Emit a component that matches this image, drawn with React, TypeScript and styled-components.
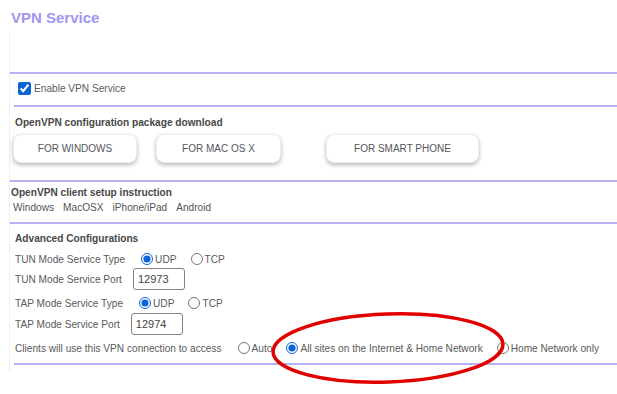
import styled, { createGlobalStyle } from "styled-components";

const GlobalStyle = createGlobalStyle`
  html, body {
    margin: 0;
    padding: 0;
    background: #fff;
  }
  body {
    font-family: "Liberation Sans", Arial, sans-serif;
    color: #5a5a5a;
  }
`;

interface RadioOption {
  label: string;
  checked?: boolean;
}

const downloads = [
  { label: "For Windows", width: 124, offset: 0 },
  { label: "For Mac OS X", width: 125, offset: 19 },
  { label: "For Smart Phone", width: 153, offset: 45 },
];

const guides = ["Windows", "MacOSX", "iPhone/iPad", "Android"];

const protocolOptions: RadioOption[] = [{ label: "UDP", checked: true }, { label: "TCP" }];

const accessOptions: RadioOption[] = [
  { label: "Auto" },
  { label: "All sites on the Internet & Home Network", checked: true },
  { label: "Home Network only" },
];

function RadioGroup({ name, options }: { name: string; options: RadioOption[] }) {
  return (
    <>
      {options.map((opt, idx) => (
        <RadioLabel key={opt.label} $first={idx === 0}>
          <Radio type="radio" name={name} defaultChecked={opt.checked} />
          {opt.label}
        </RadioLabel>
      ))}
    </>
  );
}

function App() {
  return (
    <Page>
      <GlobalStyle />
      <Title>VPN Service</Title>
      <Panel>
        <TopSpace />
        <Divider $inset={0} $top={0} />

        <CheckRow>
          <Checkbox type="checkbox" defaultChecked />
          Enable VPN Service
        </CheckRow>
        <Divider $inset={4} $top={3} />

        <Heading $top={9} $left={5}>OpenVPN configuration package download</Heading>
        <ButtonRow>
          {downloads.map((d) => (
            <DownloadButton key={d.label} $width={d.width} $offset={d.offset}>
              {d.label}
            </DownloadButton>
          ))}
        </ButtonRow>
        <Divider $inset={0} $top={17} />

        <Heading $top={5} $left={1} $compact>OpenVPN client setup instruction</Heading>
        <GuideRow>
          {guides.map((g) => (
            <GuideLink key={g}>{g}</GuideLink>
          ))}
        </GuideRow>
        <Divider $inset={0} $top={8} />

        <Heading $top={8} $left={5}>Advanced Configurations</Heading>
        <FieldRow $top={3} $height={20}>
          TUN Mode Service Type
          <RadioGroup name="tun" options={protocolOptions} />
        </FieldRow>
        <FieldRow $top={-1} $height={22}>
          TUN Mode Service Port
          <PortInput defaultValue="12973" />
        </FieldRow>
        <FieldRow $top={3} $height={20}>
          TAP Mode Service Type
          <RadioGroup name="tap" options={protocolOptions} />
        </FieldRow>
        <FieldRow $top={0} $height={22}>
          TAP Mode Service Port
          <PortInput defaultValue="12974" />
        </FieldRow>
        <FieldRow $top={3} $height={20}>
          Clients will use this VPN connection to access
          <RadioGroup name="access" options={accessOptions} />
        </FieldRow>
        <Divider $inset={4} $top={5} />
      </Panel>

      <Highlight width="240" height="80" viewBox="0 0 240 80">
        <ellipse cx="120" cy="40" rx="115" ry="34" fill="none" stroke="#e10000" strokeWidth="3.5" />
      </Highlight>
    </Page>
  );
}

export default App;

const Page = styled.div`
  position: relative;
  width: 617px;
  height: 394px;
  overflow: hidden;
`;

const Title = styled.h1`
  margin: 0;
  box-sizing: border-box;
  height: 30px;
  padding: 10px 0 0 11px;
  font-size: 15px;
  line-height: 16px;
  font-weight: bold;
  color: #a196f2;
`;

const Panel = styled.div`
  margin-left: 9px;
  border-left: 1px solid #f0f0f0;
  padding-bottom: 7px;
  font-size: 10.15px;
`;

const TopSpace = styled.div`
  height: 42px;
`;

const Divider = styled.div<{ $inset: number; $top: number }>`
  height: 2px;
  margin-left: ${(p) => p.$inset}px;
  margin-top: ${(p) => p.$top}px;
  background: #b7b2f6;
`;

const CheckRow = styled.label`
  display: flex;
  align-items: center;
  gap: 3px;
  height: 28px;
  padding-left: 8px;
`;

const Checkbox = styled.input`
  margin: 0;
  width: 13px;
  height: 13px;
  accent-color: #0b63d6;
`;

const Heading = styled.div<{ $top: number; $left: number; $compact?: boolean }>`
  margin-top: ${(p) => p.$top}px;
  padding-left: ${(p) => p.$left}px;
  line-height: ${(p) => (p.$compact ? 12 : 14)}px;
  font-weight: bold;
  color: #484848;
`;

const ButtonRow = styled.div`
  display: flex;
  margin-top: 4px;
  padding-left: 3px;
`;

const DownloadButton = styled.button<{ $width: number; $offset: number }>`
  width: ${(p) => p.$width}px;
  height: 29px;
  margin-left: ${(p) => p.$offset}px;
  border: 1px solid #ececec;
  border-radius: 8px;
  background: #fff;
  box-shadow: 0 2px 4px rgba(0, 0, 0, 0.28);
  font-family: inherit;
  font-size: 10px;
  text-transform: uppercase;
  color: #55555c;
  cursor: pointer;
`;

const GuideRow = styled.div`
  display: flex;
  gap: 9px;
  margin-top: 3px;
  padding-left: 3px;
  line-height: 12px;
`;

const GuideLink = styled.span`
  color: #555;
`;

const FieldRow = styled.div<{ $top: number; $height: number }>`
  display: flex;
  align-items: center;
  height: ${(p) => p.$height}px;
  margin-top: ${(p) => p.$top}px;
  padding-left: 5px;
  white-space: nowrap;
`;

const RadioLabel = styled.label<{ $first: boolean }>`
  display: flex;
  align-items: center;
  gap: 2px;
  margin-left: ${(p) => (p.$first ? 16 : 14)}px;
`;

const Radio = styled.input`
  margin: 0;
  width: 12px;
  height: 12px;
  accent-color: #0b63d6;
`;

const PortInput = styled.input`
  box-sizing: border-box;
  width: 52px;
  height: 22px;
  margin-left: 11px;
  padding: 0 4px;
  border: 1px solid #8a7f78;
  border-radius: 3px;
  font-family: inherit;
  font-size: 11px;
  color: #444;
  outline: none;
`;

const Highlight = styled.svg`
  position: absolute;
  left: 268px;
  top: 308px;
  transform: rotate(-2deg);
  pointer-events: none;
`;
